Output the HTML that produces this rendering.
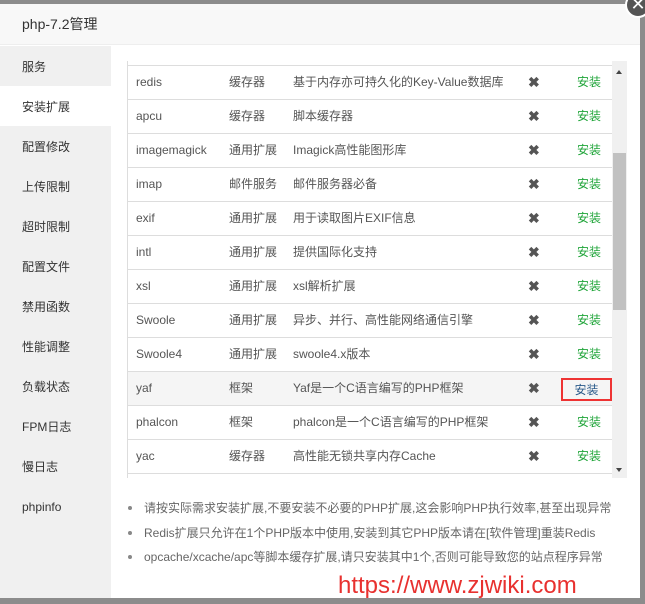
<!DOCTYPE html><html><head><meta charset="utf-8"><style>
*{margin:0;padding:0;box-sizing:border-box}
body{width:645px;height:604px;overflow:hidden;background:#8c8c8c;font-family:"Liberation Sans","Noto Sans CJK SC",sans-serif;font-size:12px;color:#555;position:relative}
.dlg{position:absolute;left:0;top:4px;width:640px;height:594px;background:#fff}
.title{height:41px;background:#f8f8f8;border-bottom:1px solid #eee;padding-left:22px;line-height:41px;font-size:14px;color:#333}
.close{position:absolute;left:625px;top:-8px;width:26px;height:26px;border-radius:50%;background:#555;border:2px solid #fff;color:#fff;font-size:18px;line-height:20px;text-align:center}
.side{position:absolute;left:0;top:42px;width:111px;height:552px;background:#f0f0f0}
.side div{height:40px;line-height:42px;padding-left:22px;font-size:12px;color:#333}
.side .act{background:#fff}
.tbl{position:absolute;left:127px;top:61px;width:485px;height:417px;overflow:hidden;border-left:1px solid #ddd}
.row{position:absolute;left:0;width:485px;height:34px;border-top:1px solid #ddd;line-height:33px}
.row span{position:absolute;top:0}
.c1{left:8px}.c2{left:101px}.c3{left:165px}.c4{left:400px;font-weight:bold;color:#555;font-size:14px}.c5{left:449px;color:#20a53a}
.sb{position:absolute;left:612px;top:61px;width:15px;height:417px;background:#f0f0f0}
.th{position:absolute;left:613px;top:153px;width:13px;height:157px;background:#c1c1c1}
ul{position:absolute;left:128px;top:496px;list-style:none;color:#666}
li{height:24.5px;line-height:24px;position:relative;padding-left:16px}
li:before{content:"";position:absolute;left:0;top:10px;width:4px;height:4px;border-radius:50%;background:#888}
.wm{position:absolute;left:338px;top:572px;color:#e8312f;font-size:24px;font-family:"Liberation Sans",sans-serif}
</style></head><body>
<div class="dlg">
<div class="title">php-7.2管理</div>
<div class="side">
<div>服务</div><div class="act">安装扩展</div><div>配置修改</div><div>上传限制</div><div>超时限制</div><div>配置文件</div><div>禁用函数</div><div>性能调整</div><div>负载状态</div><div>FPM日志</div><div>慢日志</div><div>phpinfo</div>
</div>
</div>
<div class="tbl">
<div class="row" style="top:4px"><span class="c1">redis</span><span class="c2">缓存器</span><span class="c3">基于内存亦可持久化的Key-Value数据库</span><span class="c4">✖</span><span class="c5">安装</span></div>
<div class="row" style="top:38px"><span class="c1">apcu</span><span class="c2">缓存器</span><span class="c3">脚本缓存器</span><span class="c4">✖</span><span class="c5">安装</span></div>
<div class="row" style="top:72px"><span class="c1">imagemagick</span><span class="c2">通用扩展</span><span class="c3">Imagick高性能图形库</span><span class="c4">✖</span><span class="c5">安装</span></div>
<div class="row" style="top:106px"><span class="c1">imap</span><span class="c2">邮件服务</span><span class="c3">邮件服务器必备</span><span class="c4">✖</span><span class="c5">安装</span></div>
<div class="row" style="top:140px"><span class="c1">exif</span><span class="c2">通用扩展</span><span class="c3">用于读取图片EXIF信息</span><span class="c4">✖</span><span class="c5">安装</span></div>
<div class="row" style="top:174px"><span class="c1">intl</span><span class="c2">通用扩展</span><span class="c3">提供国际化支持</span><span class="c4">✖</span><span class="c5">安装</span></div>
<div class="row" style="top:208px"><span class="c1">xsl</span><span class="c2">通用扩展</span><span class="c3">xsl解析扩展</span><span class="c4">✖</span><span class="c5">安装</span></div>
<div class="row" style="top:242px"><span class="c1">Swoole</span><span class="c2">通用扩展</span><span class="c3">异步、并行、高性能网络通信引擎</span><span class="c4">✖</span><span class="c5">安装</span></div>
<div class="row" style="top:276px"><span class="c1">Swoole4</span><span class="c2">通用扩展</span><span class="c3">swoole4.x版本</span><span class="c4">✖</span><span class="c5">安装</span></div>
<div class="row" style="top:310px;background:#f5f5f5"><span class="c1">yaf</span><span class="c2">框架</span><span class="c3">Yaf是一个C语言编写的PHP框架</span><span class="c4">✖</span><span class="c5" style="color:#2a5a8a;left:433px;top:6px;line-height:20px;height:23px;width:51px;border:2px solid #e33;text-align:center">安装</span></div>
<div class="row" style="top:344px"><span class="c1">phalcon</span><span class="c2">框架</span><span class="c3">phalcon是一个C语言编写的PHP框架</span><span class="c4">✖</span><span class="c5">安装</span></div>
<div class="row" style="top:378px"><span class="c1">yac</span><span class="c2">缓存器</span><span class="c3">高性能无锁共享内存Cache</span><span class="c4">✖</span><span class="c5">安装</span></div>
<div class="row" style="top:412px"></div>
</div>
<div class="sb"><div style="position:absolute;left:4px;top:9px;border:3.5px solid transparent;border-bottom:4px solid #444;border-top:0"></div><div style="position:absolute;left:4px;top:407px;border:3.5px solid transparent;border-top:4px solid #444;border-bottom:0"></div></div>
<div class="th"></div>
<ul>
<li>请按实际需求安装扩展,不要安装不必要的PHP扩展,这会影响PHP执行效率,甚至出现异常</li>
<li>Redis扩展只允许在1个PHP版本中使用,安装到其它PHP版本请在[软件管理]重装Redis</li>
<li>opcache/xcache/apc等脚本缓存扩展,请只安装其中1个,否则可能导致您的站点程序异常</li>
</ul>
<div class="wm">https://www.zjwiki.com</div>
<div class="close">✕</div>
</body></html>
